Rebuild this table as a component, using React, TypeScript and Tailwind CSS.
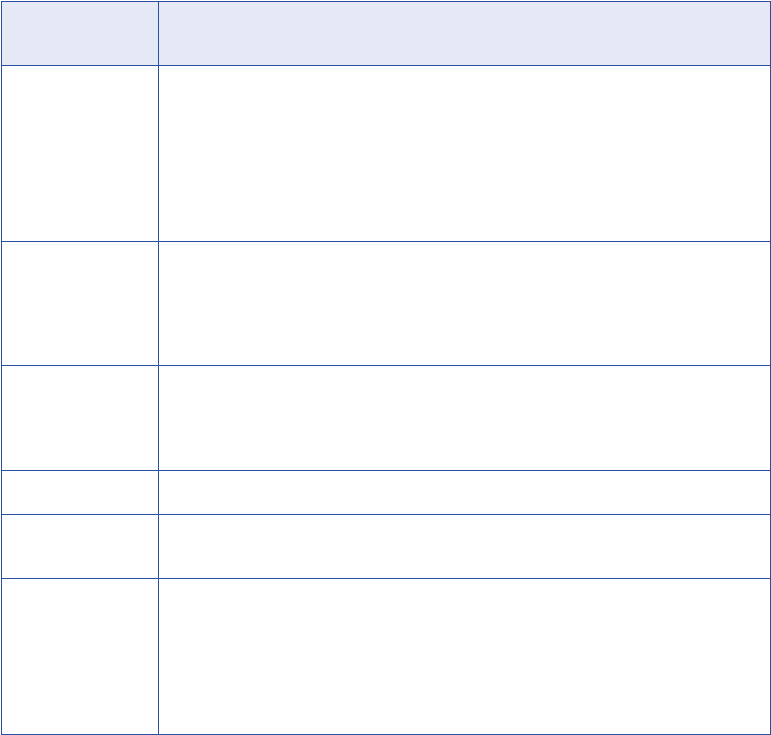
export default function App() {
  const rows = [175, 123, 104, 43, 63, 155];
  return (
    <div className="bg-white w-[771px] h-[735px] pt-[1px] pl-[1px]">
      <div className="w-[770px] border border-[#2a50a2] flex flex-col">
        <div className="flex h-[64px] bg-[#e4e9f5] border-b border-[#2a50a2]">
          <div className="w-[157px] border-r border-[#2a50a2]" />
          <div className="flex-1" />
        </div>
        {rows.map((h, i) => (
          <div
            key={i}
            className={i < rows.length - 1 ? "flex border-b border-[#2a50a2]" : "flex"}
            style={{ height: i < rows.length - 1 ? h + 1 : h }}
          >
            <div className="w-[157px] border-r border-[#2a50a2]" />
            <div className="flex-1" />
          </div>
        ))}
      </div>
    </div>
  );
}
